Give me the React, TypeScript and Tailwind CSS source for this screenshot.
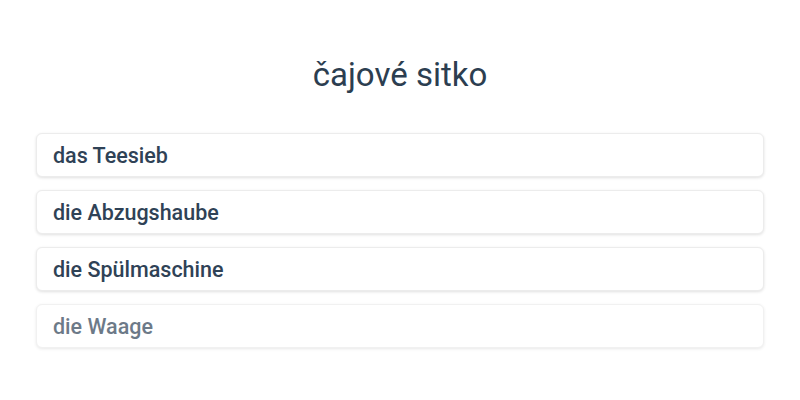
import React from 'react';

const options = [
  { label: 'das Teesieb', faded: false },
  { label: 'die Abzugshaube', faded: false },
  { label: 'die Spülmaschine', faded: false },
  { label: 'die Waage', faded: true },
];

const App: React.FC = () => {
  return (
    <div className="w-[800px] h-[400px] bg-white px-9 pt-[53px] font-['Roboto',sans-serif] text-[#2c3e50]">
      <h1 className="text-center text-[33px] leading-[44px] font-normal mb-[36px]">čajové sitko</h1>

      <div className="flex flex-col gap-[13px]">
        {options.map((opt) => (
          <button
            key={opt.label}
            type="button"
            className={`h-11 w-full text-left px-4 pt-[2px] rounded-md border border-[#ececec] bg-white shadow-[0_1px_3px_rgba(0,0,0,0.12)] text-[21.5px] font-medium text-[#2f4256] ${
              opt.faded ? 'opacity-70' : ''
            }`}
          >
            {opt.label}
          </button>
        ))}
      </div>
    </div>
  );
};

export default App;
